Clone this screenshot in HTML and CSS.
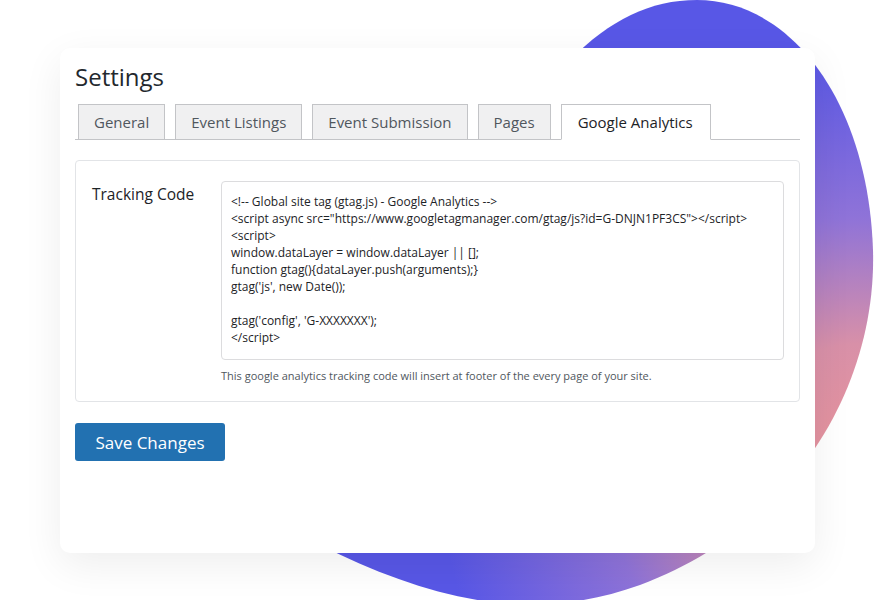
FILE: index.html
```html
<!DOCTYPE html>
<html lang="en">
<head>
    <meta charset="UTF-8">
    <meta name="viewport" content="width=device-width, initial-scale=1.0">
    <title>Settings - Google Analytics</title>
    <link rel="stylesheet" href="styles.css">
</head>
<body>

    <svg class="blob" width="875" height="600" viewBox="0 0 875 600" aria-hidden="true">
        <defs>
            <radialGradient id="blobFill" cx="860" cy="470" r="420" gradientUnits="userSpaceOnUse">
                <stop offset="0" stop-color="#ea949a"/>
                <stop offset="0.3" stop-color="#d890a8"/>
                <stop offset="0.6" stop-color="#8f73d8"/>
                <stop offset="1" stop-color="#5857e6"/>
            </radialGradient>
        </defs>
        <path d="M697 0 C790 0 868 100 873 250 C877 390 790 530 640 585 C590 603 545 607 500 603 C440 597 380 575 320 545 L300 510 L570 60 C610 20 650 0 697 0 Z" fill="url(#blobFill)"/>
    </svg>

    <div class="card">
        <h1 class="title">Settings</h1>

        <div class="tabs">
            <div class="tab">General</div>
            <div class="tab">Event Listings</div>
            <div class="tab">Event Submission</div>
            <div class="tab">Pages</div>
            <div class="tab active">Google Analytics</div>
        </div>

        <div class="panel">
            <label class="field-label" for="tracking">Tracking Code</label>
            <div class="field">
                <textarea id="tracking" class="code" readonly>&lt;!-- Global site tag (gtag.js) - Google Analytics --&gt;
&lt;script async src="https://www.googletagmanager.com/gtag/js?id=G-DNJN1PF3CS"&gt;&lt;/script&gt;
&lt;script&gt;
window.dataLayer = window.dataLayer || [];
function gtag(){dataLayer.push(arguments);}
gtag('js', new Date());

gtag('config', 'G-XXXXXXX');
&lt;/script&gt;</textarea>
                <p class="hint">This google analytics tracking code will insert at footer of the every page of your site.</p>
            </div>
        </div>

        <button type="button" class="save-btn">Save Changes</button>
    </div>

</body>
</html>
```

FILE: styles.css
```css
body {
    margin: 0;
    width: 875px;
    height: 600px;
    overflow: hidden;
    position: relative;
    background-color: #fff;
    font-family: "Open Sans", "Noto Sans", sans-serif;
    color: #23282d;
}

.blob {
    position: absolute;
    top: 0;
    left: 0;
}

.card {
    position: relative; /* sits above the blob */
    box-sizing: border-box;
    width: 755px;
    height: 505px;
    margin: 48px 0 0 60px;
    padding: 14px 15px 0 15px;
    background-color: #fff;
    border-radius: 10px;
    box-shadow: 0 12px 40px rgba(0, 0, 0, 0.07);
}

.title {
    margin: 0;
    font-size: 24px;
    font-weight: 400;
    line-height: 30px;
    color: #23282d;
}

.tabs {
    display: flex;
    gap: 10px;
    margin-top: 12px;
    padding-left: 3px;
    border-bottom: 1px solid #c3c4c7;
}

.tab {
    height: 34px;
    line-height: 34px;
    padding: 0 15px;
    margin-bottom: -1px;
    border: 1px solid #c3c4c7;
    background-color: #f0f0f1;
    font-size: 15px;
    color: #50575e;
}

.tab.active {
    padding: 0 17px 0 16px;
    background-color: #fff;
    border-bottom-color: #fff;
    color: #1d2327;
}

.panel {
    display: flex;
    box-sizing: border-box;
    height: 242px;
    margin-top: 20px;
    padding: 20px 15px 0 16px;
    border: 1px solid #e2e4e7;
    border-radius: 4px;
}

.field-label {
    width: 129px;
    flex-shrink: 0;
    padding-top: 2px;
    font-size: 15.5px;
    font-weight: 500;
    color: #1d2327;
}

.field {
    flex: 1;
}

.code {
    display: block;
    box-sizing: border-box;
    width: 100%;
    height: 179px;
    padding: 11px 9px;
    border: 1px solid #dcdcde;
    border-radius: 4px;
    resize: none;
    font-family: "Open Sans", "Noto Sans", sans-serif;
    font-size: 12px;
    line-height: 17px;
    color: #1d2327;
    outline: none;
}

.hint {
    margin: 8px 0 0 0;
    font-size: 11px;
    color: #50575e;
}

.save-btn {
    display: block;
    margin-top: 21px;
    width: 150px;
    height: 38px;
    border: none;
    border-radius: 3px;
    background-color: #2271b1;
    color: #fff;
    font-family: "Open Sans", "Noto Sans", sans-serif;
    font-size: 17px;
}
```
